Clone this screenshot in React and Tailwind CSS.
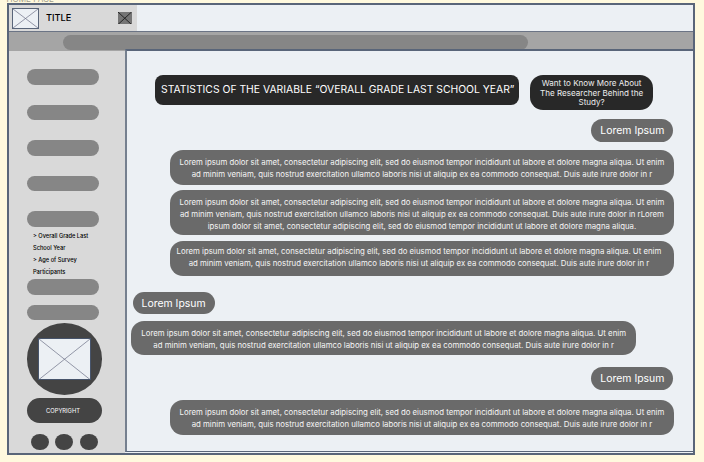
import React from "react";

const L1 =
  "Lorem ipsum dolor sit amet, consectetur adipiscing elit, sed do eiusmod tempor incididunt ut labore et dolore magna aliqua. Ut enim";
const L2 =
  "ad minim veniam, quis nostrud exercitation ullamco laboris nisi ut aliquip ex ea commodo consequat. Duis aute irure dolor in r";
const L3 =
  "ipsum dolor sit amet, consectetur adipiscing elit, sed do eiusmod tempor incididunt ut labore et dolore magna aliqua.";

function Crossed({ className, stroke = "#6b7085", width = 0.7 }) {
  return (
    <div className={className}>
      <svg className="block h-full w-full" viewBox="0 0 100 100" preserveAspectRatio="none">
        <path
          d="M0 0L100 100M100 0L0 100"
          stroke={stroke}
          strokeWidth={width}
          fill="none"
          vectorEffect="non-scaling-stroke"
        />
      </svg>
    </div>
  );
}

function NavPill({ className = "" }) {
  return <div className={`ml-[17.6px] h-[15.5px] w-[72.3px] shrink-0 rounded-full bg-[#868686] ${className}`} />;
}

function Tag({ className = "" }) {
  return (
    <div
      className={`flex h-[22.6px] w-[82px] shrink-0 items-center justify-center rounded-full bg-[#6a6a6a] pt-[2px] text-[10.45px] leading-none text-white ${className}`}
    >
      Lorem Ipsum
    </div>
  );
}

function Bubble({ lines, className = "" }) {
  return (
    <div
      className={`w-[504.5px] shrink-0 rounded-[13px] bg-[#6a6a6a] text-center text-[7.81px] leading-[12px] text-[#f5f5f5] ${className}`}
    >
      {lines.map((line) => (
        <p key={line} className="whitespace-nowrap">
          {line}
        </p>
      ))}
    </div>
  );
}

export default function App() {
  return (
    <div className="flex h-[462px] w-[704px] flex-col overflow-hidden bg-[#fff9de] font-[Inter,sans-serif]">
      <div className="flex h-[3px] shrink-0 items-end pl-[6.5px]">
        <span className="-mb-[1px] text-[8.1px] leading-[10px] text-[#a09c8c]">HOME PAGE</span>
      </div>

      <div className="ml-[7px] flex h-[452px] w-[688px] shrink-0 flex-col border-2 border-[#596579] bg-[#ecf0f4]">
        <header className="flex h-[26px] shrink-0">
          <div className="flex w-[128px] items-center bg-[#d9d9d9]">
            <Crossed className="ml-[3px] h-[21px] w-[27px] border border-[#596579] bg-[#ecf0f4]" />
            <span className="ml-[7px] w-[72px] text-[9.25px] font-medium leading-none text-black">TITLE</span>
            <Crossed className="h-[12.5px] w-[13.5px] bg-[#757575]" stroke="#1c1c1c" width={0.9} />
          </div>
        </header>

        <div className="h-[20px] shrink-0 border-t border-[#6b7485] bg-[#a5a5a5]">
          <div className="ml-[54px] mt-[3px] h-[15px] w-[465px] rounded-full bg-[#868686]" />
        </div>

        <div className="flex min-h-0 flex-1">
          <aside className="flex w-[116px] shrink-0 flex-col bg-[#d9d9d9]">
            <NavPill className="mt-[18px]" />
            <NavPill className="mt-[20px]" />
            <NavPill className="mt-[20px]" />
            <NavPill className="mt-[20px]" />
            <NavPill className="mt-[20px]" />
            <div className="ml-[24px] mt-[3.8px] text-[5.68px] font-medium leading-[11.9px] text-black">
              <p>&gt; Overall Grade Last</p>
              <p>School Year</p>
              <p>&gt; Age of Survey</p>
              <p>Participants</p>
            </div>
            <NavPill className="mt-[1.5px]" />
            <NavPill className="mt-[9.6px]" />

            <div className="ml-[17.5px] mt-[3px] flex h-[71.5px] w-[75px] shrink-0 items-center justify-center rounded-[50%] bg-[#444444]">
              <Crossed className="h-[42.5px] w-[53px] border-[1.5px] border-[#47546b] bg-[#ecf0f4]" />
            </div>

            <div className="ml-[17.5px] mt-[3.2px] flex h-[25px] w-[75px] shrink-0 items-center justify-center rounded-full bg-[#444444] pt-px text-[5.8px] leading-none text-white">
              <span className="-ml-[2px]">COPYRIGHT</span>
            </div>

            <div className="ml-[22.3px] mt-[11px] flex shrink-0">
              <div className="h-[16.5px] w-[18px] rounded-[50%] bg-[#444444]" />
              <div className="ml-[5.8px] h-[16.5px] w-[18px] rounded-[50%] bg-[#444444]" />
              <div className="ml-[6.8px] h-[16.5px] w-[18px] rounded-[50%] bg-[#444444]" />
            </div>
          </aside>

          <main className="-mt-[2px] mb-px flex min-w-0 flex-1 flex-col border-b border-l-2 border-t-2 border-[#596579] border-l-[#75808f] bg-[#ecf0f4]">
            <div className="ml-[28px] mt-[23.5px] flex shrink-0 items-start">
              <h1 className="flex h-[30.5px] w-[363.5px] items-center justify-center whitespace-nowrap rounded-[8px] bg-[#282828] pl-[2px] pt-px text-[10.37px] leading-none text-white">
                STATISTICS OF THE VARIABLE “OVERALL GRADE LAST SCHOOL YEAR”
              </h1>
              <div className="ml-[11.3px] mt-[0.5px] flex h-[35.3px] w-[123.7px] flex-col items-center justify-center whitespace-nowrap rounded-[13px] bg-[#282828] pt-[1.5px] text-[8.05px] leading-[9.7px] text-[#ededed]">
                <p>Want to Know More About</p>
                <p>The Researcher Behind the</p>
                <p>Study?</p>
              </div>
            </div>

            <Tag className="ml-[464.4px] mt-[9px]" />

            <Bubble className="ml-[42.7px] mt-[8.2px] h-[34.5px] pt-[6px]" lines={[L1, L2]} />
            <Bubble className="ml-[42.7px] mt-[5.5px] h-[45px] pt-[6.3px]" lines={[L1, L2 + "Lorem", L3]} />
            <Bubble className="ml-[42.7px] mt-[5.6px] h-[35px] pr-[6px] pt-[4.4px]" lines={[L1, L2]} />

            <Tag className="ml-[5.6px] mt-[16px]" />
            <Bubble className="ml-[4.4px] mt-[6.4px] h-[34.5px] pt-[6px]" lines={[L1, L2]} />

            <Tag className="ml-[464.4px] mt-[12.2px]" />
            <Bubble className="ml-[42.7px] mt-[10.2px] h-[34.7px] pt-[6.3px]" lines={[L1, L2]} />
          </main>
        </div>
      </div>
    </div>
  );
}
